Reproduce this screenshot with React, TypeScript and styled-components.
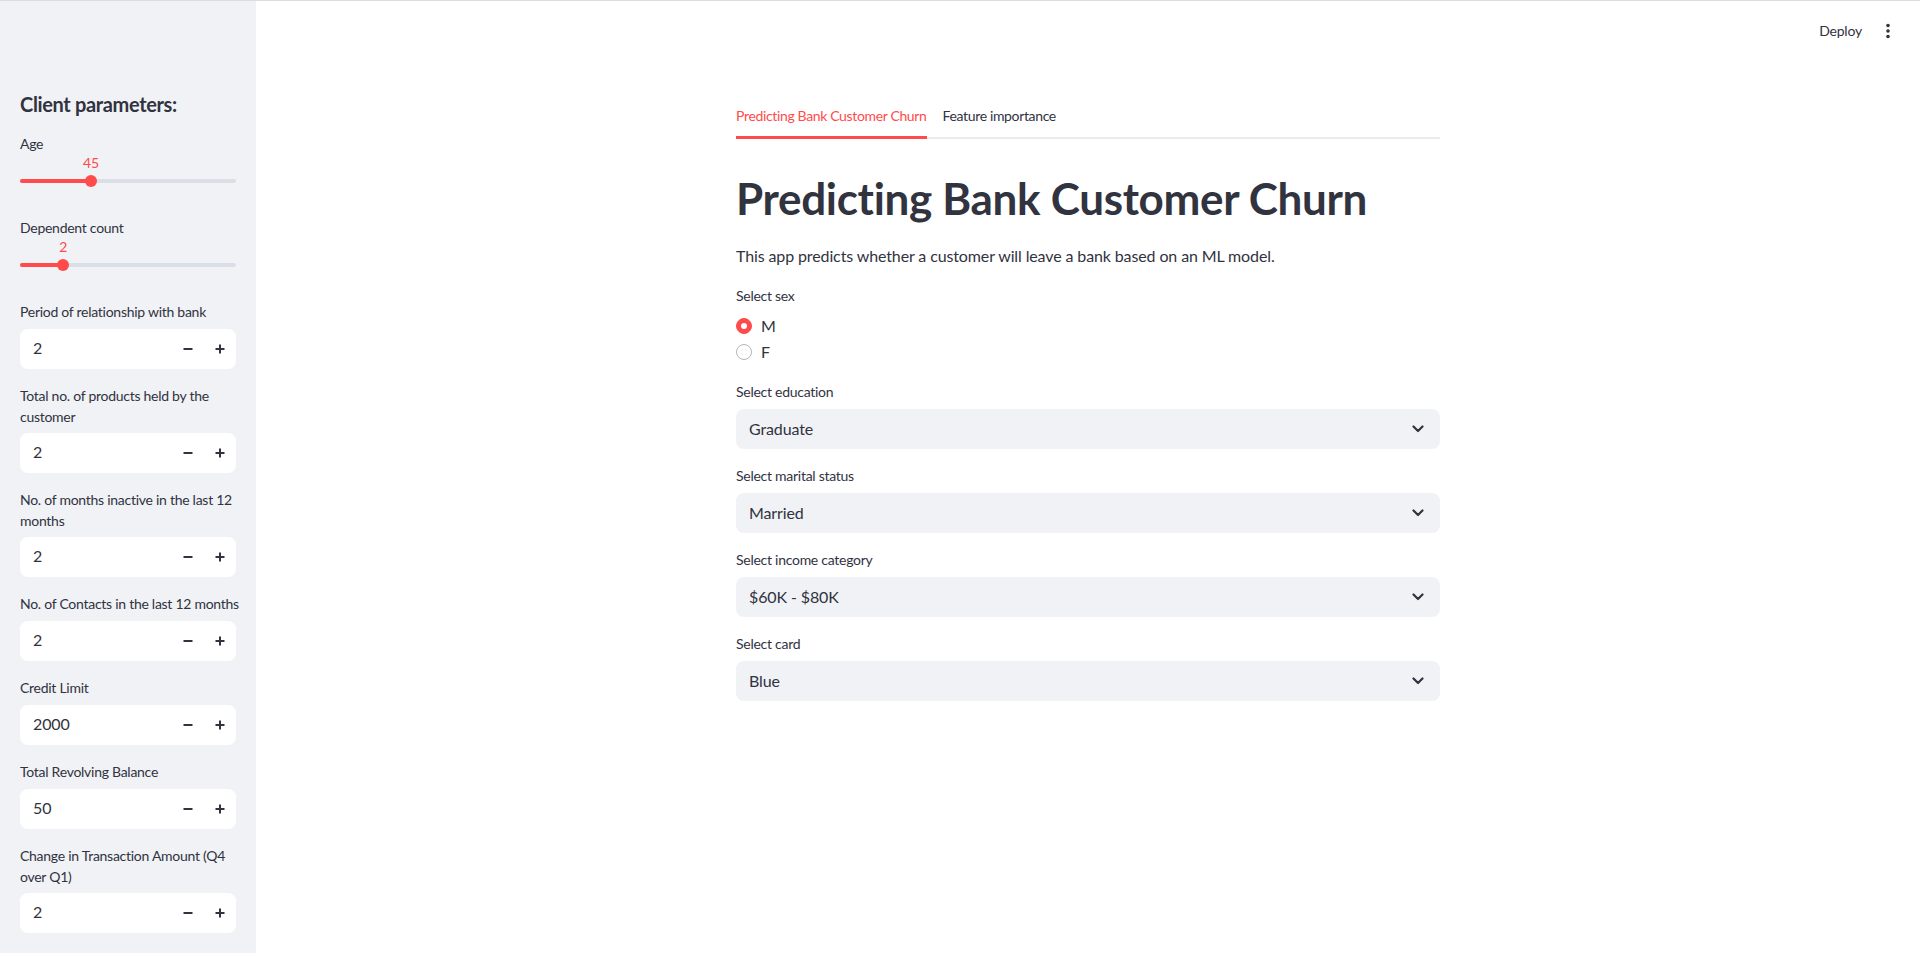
import React from "react";
import styled, { createGlobalStyle } from "styled-components";

const GlobalStyle = createGlobalStyle`
  html, body { margin: 0; padding: 0; height: 100%; overflow: hidden; background: #ffffff; }
  body { font-family: "Source Sans Pro", Lato, "Noto Sans", sans-serif; color: #31333f; }
  *, *::before, *::after { box-sizing: border-box; }
`;

const RED = "#ff4b4b";
const TEXT = "#31333f";

const Shell = styled.div`
  display: flex;
  flex-direction: column;
  height: 100vh;
`;

const TopRule = styled.div`
  flex: none;
  height: 1px;
  background: #dcdcdc;
`;

const Body = styled.div`
  display: flex;
  flex: 1;
  min-height: 0;
`;

const Sidebar = styled.aside`
  flex: none;
  width: 256px;
  background: #f0f2f6;
  padding: 92px 20px 0;
  display: flex;
  flex-direction: column;
  gap: 16px;
  overflow: hidden;
`;

const SideHeading = styled.h2`
  margin: -1px 0 1px;
  font-size: 20px;
  line-height: 24px;
  font-weight: 700;
  letter-spacing: -0.35px;
  color: ${TEXT};
`;

const Field = styled.div`
  display: flex;
  flex-direction: column;
`;

const Label = styled.label`
  display: block;
  font-size: 14px;
  line-height: 21px;
  min-height: 22px;
  margin: 0 0 6px;
  letter-spacing: -0.27px;
  color: ${TEXT};
  ${Sidebar} & {
    margin-right: -8px;
  }
`;

const SliderArea = styled.div`
  position: relative;
  height: 40px;
`;

const Track = styled.div`
  margin-top: 18px;
  height: 4px;
  border-radius: 2px;
  background: #dadee7;
  overflow: hidden;
`;

const TrackFill = styled.div`
  height: 100%;
  background: ${RED};
`;

const Thumb = styled.div`
  position: absolute;
  top: 14px;
  width: 12px;
  height: 12px;
  border-radius: 50%;
  background: ${RED};
  transform: translateX(-50%);
`;

const ThumbValue = styled.div`
  position: absolute;
  top: -9px;
  font-size: 14px;
  line-height: 21px;
  color: ${RED};
  transform: translateX(-50%);
  white-space: nowrap;
`;

const NumberBox = styled.div`
  display: flex;
  align-items: center;
  height: 40px;
  background: #ffffff;
  border-radius: 8px;
`;

const NumberValue = styled.div`
  flex: 1;
  padding: 0 0 3px 13px;
  font-size: 16px;
  letter-spacing: -0.12px;
  color: ${TEXT};
`;

const StepButton = styled.div`
  width: 32px;
  height: 100%;
  display: flex;
  align-items: center;
  justify-content: center;
  color: ${TEXT};
`;

const Main = styled.main`
  flex: 1;
  display: flex;
  flex-direction: column;
  min-width: 0;
`;

const Header = styled.header`
  flex: none;
  height: 60px;
  display: flex;
  align-items: center;
  justify-content: flex-end;
  padding-right: 16px;
  gap: 10px;
`;

const DeployButton = styled.div`
  font-size: 14px;
  letter-spacing: -0.2px;
  padding-bottom: 1px;
  color: ${TEXT};
`;

const MenuButton = styled.div`
  width: 32px;
  height: 32px;
  display: flex;
  align-items: center;
  justify-content: center;
  color: ${TEXT};
`;

const ContentWrap = styled.div`
  flex: 1;
  display: flex;
  justify-content: center;
  padding-top: 35px;
`;

const Column = styled.div`
  width: 736px;
  padding: 0 16px;
`;

const TabList = styled.div`
  position: relative;
  display: flex;
  gap: 16px;
  &::after {
    content: "";
    position: absolute;
    left: 0;
    right: 0;
    bottom: 0;
    height: 2px;
    background: #ebebec;
  }
`;

const Tab = styled.div<{ $active?: boolean }>`
  position: relative;
  z-index: 1;
  height: 43px;
  line-height: 40px;
  font-size: 14px;
  letter-spacing: -0.35px;
  color: ${(p) => (p.$active ? RED : TEXT)};
  border-bottom: 3px solid ${(p) => (p.$active ? RED : "transparent")};
  white-space: nowrap;
`;

const TabPanel = styled.div`
  padding-top: 16px;
  display: flex;
  flex-direction: column;
  gap: 16px;
`;

const Title = styled.h1`
  margin: 0 0 3px;
  padding-top: 17px;
  font-size: 44px;
  line-height: 52.8px;
  font-weight: 700;
  letter-spacing: -0.32px;
  color: ${TEXT};
`;

const Paragraph = styled.p`
  margin: -1px 0 1px;
  font-size: 16px;
  line-height: 25.6px;
  letter-spacing: -0.12px;
  color: ${TEXT};
`;

const RadioGroup = styled.div`
  display: flex;
  flex-direction: column;
`;

const RadioRow = styled.div`
  height: 26px;
  display: flex;
  align-items: center;
  gap: 9px;
  font-size: 16px;
  color: ${TEXT};
`;

const RadioText = styled.span`
  padding-bottom: 2px;
`;

const RadioDot = styled.span<{ $checked?: boolean }>`
  flex: none;
  width: 16px;
  height: 16px;
  border-radius: 50%;
  display: flex;
  align-items: center;
  justify-content: center;
  background: ${(p) => (p.$checked ? RED : "#ffffff")};
  border: 1px solid ${(p) => (p.$checked ? RED : "#b4b5ba")};
  &::after {
    content: "";
    width: 6px;
    height: 6px;
    border-radius: 50%;
    background: ${(p) => (p.$checked ? "#ffffff" : "transparent")};
  }
`;

const SelectBox = styled.div`
  height: 40px;
  background: #f0f2f6;
  border-radius: 8px;
  display: flex;
  align-items: center;
  justify-content: space-between;
  padding: 0 16px 0 13px;
  font-size: 16px;
  letter-spacing: -0.12px;
  color: ${TEXT};
`;

const SelectValue = styled.span`
  padding-bottom: 2px;
`;

const MinusIcon = () => (
  <svg width="10" height="10" viewBox="0 0 10 10">
    <path d="M0.5 5 H9.5" stroke={TEXT} strokeWidth="2" />
  </svg>
);

const PlusIcon = () => (
  <svg width="10" height="10" viewBox="0 0 10 10">
    <path d="M0.5 5 H9.5 M5 0.5 V9.5" stroke={TEXT} strokeWidth="2" />
  </svg>
);

const ChevronIcon = () => (
  <svg width="12" height="8" viewBox="0 0 12 8" fill="none">
    <path d="M1.5 1.5 L6 6 L10.5 1.5" stroke={TEXT} strokeWidth="2.2" strokeLinecap="round" strokeLinejoin="round" />
  </svg>
);

const KebabIcon = () => (
  <svg width="4" height="16" viewBox="0 0 4 16">
    <circle cx="2" cy="2.5" r="1.8" fill={TEXT} />
    <circle cx="2" cy="8" r="1.8" fill={TEXT} />
    <circle cx="2" cy="13.5" r="1.8" fill={TEXT} />
  </svg>
);

const Slider: React.FC<{ label: string; value: number; min: number; max: number }> = ({ label, value, min, max }) => {
  const pct = ((value - min) / (max - min)) * 100;
  return (
    <Field>
      <Label>{label}</Label>
      <SliderArea>
        <Track>
          <TrackFill style={{ width: `${pct}%` }} />
        </Track>
        <ThumbValue style={{ left: `${pct}%` }}>{value}</ThumbValue>
        <Thumb style={{ left: `${pct}%` }} />
      </SliderArea>
    </Field>
  );
};

const NumberInput: React.FC<{ label: string; value: string }> = ({ label, value }) => (
  <Field>
    <Label>{label}</Label>
    <NumberBox>
      <NumberValue>{value}</NumberValue>
      <StepButton>
        <MinusIcon />
      </StepButton>
      <StepButton>
        <PlusIcon />
      </StepButton>
    </NumberBox>
  </Field>
);

const Select: React.FC<{ label: string; value: string }> = ({ label, value }) => (
  <Field>
    <Label>{label}</Label>
    <SelectBox>
      <SelectValue>{value}</SelectValue>
      <ChevronIcon />
    </SelectBox>
  </Field>
);

const numberFields = [
  { label: "Period of relationship with bank", value: "2" },
  { label: "Total no. of products held by the customer", value: "2" },
  { label: "No. of months inactive in the last 12 months", value: "2" },
  { label: "No. of Contacts in the last 12 months", value: "2" },
  { label: "Credit Limit", value: "2000" },
  { label: "Total Revolving Balance", value: "50" },
  { label: "Change in Transaction Amount (Q4 over Q1)", value: "2" },
];

const selects = [
  { label: "Select education", value: "Graduate" },
  { label: "Select marital status", value: "Married" },
  { label: "Select income category", value: "$60K - $80K" },
  { label: "Select card", value: "Blue" },
];

export default function App() {
  return (
    <>
      <GlobalStyle />
      <Shell>
        <TopRule />
        <Body>
          <Sidebar>
            <SideHeading>Client parameters:</SideHeading>
            <Slider label="Age" value={45} min={18} max={100} />
            <Slider label="Dependent count" value={2} min={0} max={10} />
            {numberFields.map((f) => (
              <NumberInput key={f.label} label={f.label} value={f.value} />
            ))}
          </Sidebar>
          <Main>
            <Header>
              <DeployButton>Deploy</DeployButton>
              <MenuButton>
                <KebabIcon />
              </MenuButton>
            </Header>
            <ContentWrap>
              <Column>
                <TabList>
                  <Tab $active>Predicting Bank Customer Churn</Tab>
                  <Tab>Feature importance</Tab>
                </TabList>
                <TabPanel>
                  <Title>Predicting Bank Customer Churn</Title>
                  <Paragraph>This app predicts whether a customer will leave a bank based on an ML model.</Paragraph>
                  <Field>
                    <Label>Select sex</Label>
                    <RadioGroup>
                      <RadioRow>
                        <RadioDot $checked />
                        <RadioText>M</RadioText>
                      </RadioRow>
                      <RadioRow>
                        <RadioDot />
                        <RadioText>F</RadioText>
                      </RadioRow>
                    </RadioGroup>
                  </Field>
                  {selects.map((s) => (
                    <Select key={s.label} label={s.label} value={s.value} />
                  ))}
                </TabPanel>
              </Column>
            </ContentWrap>
          </Main>
        </Body>
      </Shell>
    </>
  );
}
